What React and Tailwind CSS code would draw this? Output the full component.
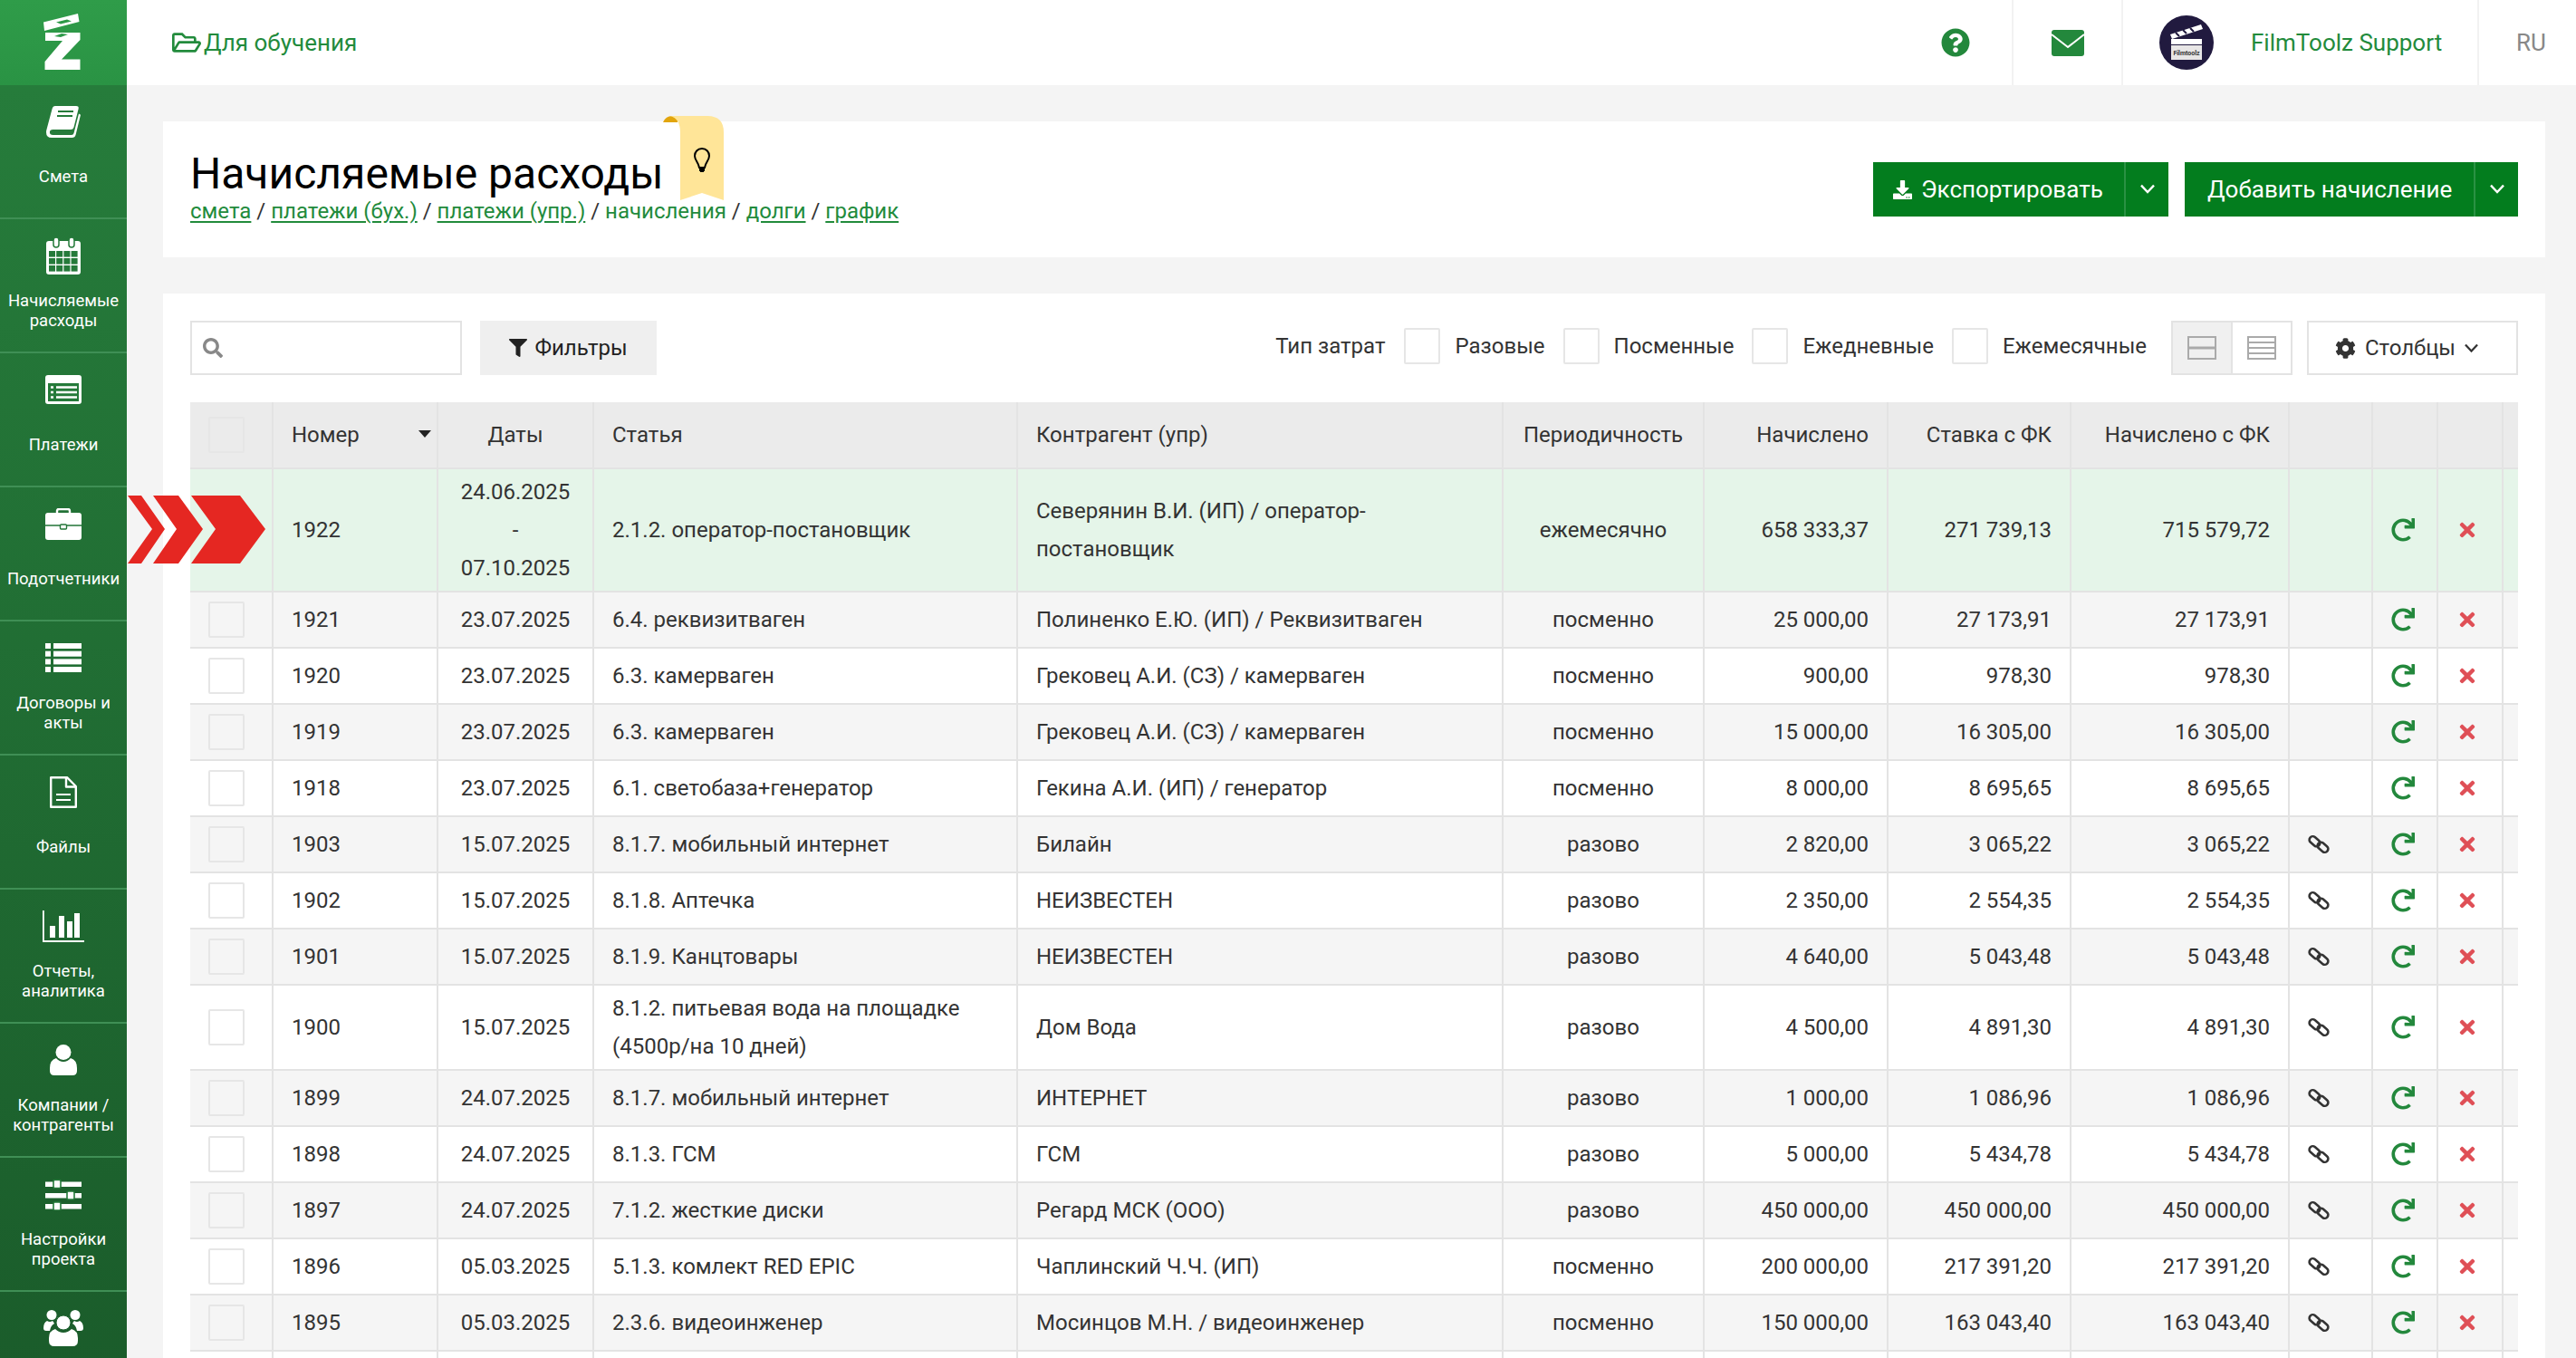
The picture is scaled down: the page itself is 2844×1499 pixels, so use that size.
import React from "react";
import { FaRegFolderOpen, FaQuestionCircle, FaDownload, FaFilter, FaCog, FaRedo, FaTimes, FaSearch } from "react-icons/fa";

const G = "#257a3a";
const IBook = () => (
  <svg width="38" height="35" viewBox="0 0 38 35" fill="#fff">
    <path d="M10 0h23q3.4 0 2.6 3.2L30.5 23.5q-.7 2.5-3.5 2.5H7.5q-3.6 0-3.6 3t3.6 3H28q2 0 2.5-2L36 8.5l2 1.2-5.4 22q-.8 3.3-4.2 3.3H6q-6 0-6-6 0-1.7.6-3.6L6.6 3q.8-3 3.4-3z" />
    <path d="M13 6h17M12 11h17" stroke={G} strokeWidth="2.2" />
  </svg>
);
const ICalendar = () => (
  <svg width="38" height="41" viewBox="0 0 38 41">
    <rect x="0" y="4" width="38" height="37" rx="3" fill="#fff" />
    <rect x="8" y="0" width="6" height="11" rx="3" fill="#fff" stroke={G} strokeWidth="1.5" />
    <rect x="25" y="0" width="6" height="11" rx="3" fill="#fff" stroke={G} strokeWidth="1.5" />
    {[0, 1, 2, 3].map((c) =>
      [0, 1, 2].map((r) => <rect key={c + "-" + r} x={3 + c * 8.2} y={15 + r * 8} width="7" height="6.6" fill={G} />)
    )}
  </svg>
);
const IListAlt = () => (
  <svg width="40" height="32" viewBox="0 0 40 32">
    <rect width="40" height="32" rx="3" fill="#fff" />
    <rect x="3" y="9" width="34" height="20" fill={G} />
    <path d="M12 13.5h23M12 19h23M12 24.5h23M6 13.5h3M6 19h3M6 24.5h3" stroke="#fff" strokeWidth="2.4" />
  </svg>
);
const IBrief = () => (
  <svg width="40" height="35" viewBox="0 0 40 35">
    <path d="M13 6V3q0-2 2-2h10q2 0 2 2v3" fill="none" stroke="#fff" strokeWidth="2.4" />
    <rect y="5" width="40" height="30" rx="3" fill="#fff" />
    <path d="M0 19h16M24 19h16" stroke="#237538" strokeWidth="1.4" />
    <rect x="16.5" y="18" width="7" height="5" rx="1" fill="#fff" stroke="#237538" strokeWidth="1.4" />
  </svg>
);
const IList = () => (
  <svg width="40" height="32" viewBox="0 0 40 32" fill="#fff">
    {[0, 8.7, 17.4, 26].map((y) => (
      <g key={y}>
        <rect y={y} width="6" height="6" />
        <rect x="9" y={y} width="31" height="6" />
      </g>
    ))}
  </svg>
);
const IFile = () => (
  <svg width="30" height="35" viewBox="0 0 30 35" fill="none" stroke="#fff" strokeWidth="2.4" strokeLinejoin="round">
    <path d="M1.2 1.2H19L28.8 11v22.8H1.2z" />
    <path d="M18 1.2V11.5H28.8" />
    <path d="M7 20h16M7 26h16" strokeWidth="2.2" />
  </svg>
);
const IChart = () => (
  <svg width="46" height="35" viewBox="0 0 46 35" fill="#fff">
    <path d="M0 0h1.8v33H46v2H0z" />
    <rect x="8" y="17" width="6" height="13" />
    <rect x="18" y="6" width="6" height="24" />
    <rect x="27" y="12" width="6" height="18" />
    <rect x="35" y="3" width="6" height="27" />
  </svg>
);
const IUser = () => (
  <svg width="30" height="34" viewBox="0 0 30 34" fill="#fff">
    <circle cx="15" cy="8.5" r="8.5" />
    <path d="M7 15q3.500 4 8 4t8-4q7 2 7 11v3q0 5-5 5H5q-5 0-5-5v-3q0-9 7-11z" />
  </svg>
);
const ISliders = () => (
  <svg width="40" height="35" viewBox="0 0 40 35" fill="#fff" stroke={G}>
    <rect y="3.500" width="40" height="5.500" stroke="none" />
    <rect y="16" width="40" height="5.500" stroke="none" />
    <rect y="28" width="40" height="5.500" stroke="none" />
    <rect x="9" y="1.500" width="8" height="9" rx="1.500" strokeWidth="1.600" />
    <rect x="24" y="14" width="8" height="9" rx="1.500" strokeWidth="1.600" />
    <rect x="9" y="26" width="8" height="9" rx="1.500" strokeWidth="1.600" />
  </svg>
);
const IUsers = () => (
  <svg width="44" height="40" viewBox="0 0 44 40" fill="#fff">
    <circle cx="9" cy="5.500" r="5.500" />
    <circle cx="35" cy="5.500" r="5.500" />
    <path d="M4 12q-4 2-4 8 0 3 3 3h4q1-6 5-8-1-2-2-3-3 2-6 0zM40 12q4 2 4 8 0 3-3 3h-4q-1-6-5-8 1-2 2-3 3 2 6 0z" />
    <circle cx="22" cy="14" r="8" stroke="#1c5f2c" strokeWidth="1" />
    <path d="M13 21q4 4 9 4t9-4q7 2 7 10v3q0 6-6 6H12q-6 0-6-6v-3q0-8 7-10z" />
  </svg>
);

const Logo = () => (
  <svg width="44" height="62" viewBox="0 0 44 62" fill="#fff" className="mt-[-2px]">
    <path d="M0 9.500 38 0l1.500 9L1 19z" />
    <path d="M14 9.500 26 6.500l5 2-12 3z" fill="#2c9947" />
    <path d="M2 21h38.500v8L20 50.500h20.500V62H1.500v-9L21 30H2z" />
    <path d="M12 25l8-3 7 1-8 3z" fill="#2c9947" />
  </svg>
);

const nav = [
  [IBook, ["Смета"]],
  [ICalendar, ["Начисляемые", "расходы"]],
  [IListAlt, ["Платежи"]],
  [IBrief, ["Подотчетники"]],
  [IList, ["Договоры и", "акты"]],
  [IFile, ["Файлы"]],
  [IChart, ["Отчеты,", "аналитика"]],
  [IUser, ["Компании /", "контрагенты"]],
  [ISliders, ["Настройки", "проекта"]],
  [IUsers, []],
];

const Check = ({ cls = "" }) => <span className={"block w-10 h-10 border-2 border-[#e6e6e6] rounded-[2px] " + cls} />;

const Chain = () => (
  <svg width="24" height="24" viewBox="0 0 24 24" fill="none" stroke="#333" strokeWidth="2.600">
    <rect x="1" y="5" width="13" height="7.500" rx="3.700" transform="rotate(40 7.500 8.750)" />
    <rect x="10" y="11.500" width="13" height="7.500" rx="3.700" transform="rotate(40 16.500 15.250)" />
  </svg>
);

const Chevron = ({ size = 16 }) => (
  <svg width={size} height={size * 0.7} viewBox="0 0 16 11" fill="none" stroke="currentColor" strokeWidth="2.400">
    <path d="M1 1.500 8 9l7-7.500" />
  </svg>
);

const rows = [
  ["1922", ["24.06.2025", "-", "07.10.2025"], "2.1.2. оператор-постановщик", "Северянин В.И. (ИП) / оператор-постановщик", "ежемесячно", "658 333,37", "271 739,13", "715 579,72", 0],
  ["1921", ["23.07.2025"], "6.4. реквизитваген", "Полиненко Е.Ю. (ИП) / Реквизитваген", "посменно", "25 000,00", "27 173,91", "27 173,91", 0],
  ["1920", ["23.07.2025"], "6.3. камерваген", "Грековец А.И. (СЗ) / камерваген", "посменно", "900,00", "978,30", "978,30", 0],
  ["1919", ["23.07.2025"], "6.3. камерваген", "Грековец А.И. (СЗ) / камерваген", "посменно", "15 000,00", "16 305,00", "16 305,00", 0],
  ["1918", ["23.07.2025"], "6.1. светобаза+генератор", "Гекина А.И. (ИП) / генератор", "посменно", "8 000,00", "8 695,65", "8 695,65", 0],
  ["1903", ["15.07.2025"], "8.1.7. мобильный интернет", "Билайн", "разово", "2 820,00", "3 065,22", "3 065,22", 1],
  ["1902", ["15.07.2025"], "8.1.8. Аптечка", "НЕИЗВЕСТЕН", "разово", "2 350,00", "2 554,35", "2 554,35", 1],
  ["1901", ["15.07.2025"], "8.1.9. Канцтовары", "НЕИЗВЕСТЕН", "разово", "4 640,00", "5 043,48", "5 043,48", 1],
  ["1900", ["15.07.2025"], "8.1.2. питьевая вода на площадке (4500р/на 10 дней)", "Дом Вода", "разово", "4 500,00", "4 891,30", "4 891,30", 1],
  ["1899", ["24.07.2025"], "8.1.7. мобильный интернет", "ИНТЕРНЕТ", "разово", "1 000,00", "1 086,96", "1 086,96", 1],
  ["1898", ["24.07.2025"], "8.1.3. ГСМ", "ГСМ", "разово", "5 000,00", "5 434,78", "5 434,78", 1],
  ["1897", ["24.07.2025"], "7.1.2. жесткие диски", "Регард МСК (ООО)", "разово", "450 000,00", "450 000,00", "450 000,00", 1],
  ["1896", ["05.03.2025"], "5.1.3. комлект RED EPIC", "Чаплинский Ч.Ч. (ИП)", "посменно", "200 000,00", "217 391,20", "217 391,20", 1],
  ["1895", ["05.03.2025"], "2.3.6. видеоинженер", "Мосинцов М.Н. / видеоинженер", "посменно", "150 000,00", "163 043,40", "163 043,40", 1],
];

const td = "border-r-2 border-b-2 border-[#e3e3e3] px-5 py-1 h-[62px] align-middle";
const th = "border-r-2 border-b-2 border-[#e3e3e3] px-5 h-[74px] align-middle font-normal";
const widths = ["w-[92px]", "w-[182px]", "w-[172px]", "w-[468px]", "w-[536px]", "w-[222px]", "w-[203px]", "w-[202px]", "w-[241px]", "w-[92px]", "w-[72px]", "w-[72px]", "w-[16px]"];

const Filter = ({ label, cls }) => (
  <div className={"flex items-center gap-4 " + cls}>
    <Check cls="bg-white" />
    <span>{label}</span>
  </div>
);

const Crumb = ({ children }) => <a className="text-[#228b3c] underline underline-offset-[3px]">{children}</a>;

export default function App() {
  return (
    <div className="flex h-screen w-screen overflow-hidden bg-[#f4f4f4] font-[Roboto] text-[24px] leading-[42px] text-[#333]">
      <aside className="w-[140px] shrink-0 flex flex-col overflow-hidden">
        <div className="h-[94px] shrink-0 flex items-center justify-center bg-gradient-to-b from-[#2f9c49] to-[#2a9344]">
          <Logo />
        </div>
        <nav className="flex-1 bg-gradient-to-b from-[#267c3b] to-[#1a5b2a] text-white text-[18.500px] leading-[22.500px]">
          {nav.map(([Icon, lines], i) => (
            <div key={i} className={"h-[148px] pt-[18px] flex flex-col items-center border-b-2 border-[#3f8f55] " + (i === 0 ? "h-[146px]" : "")}>
              <div className="h-[44px] flex items-center justify-center">
                <Icon />
              </div>
              <div className="h-[46px] mt-[16px] flex flex-col justify-center items-center">
                {lines.map((l) => (
                  <span key={l} className="whitespace-nowrap">{l}</span>
                ))}
              </div>
            </div>
          ))}
        </nav>
      </aside>

      <div className="flex-1 min-w-0 flex flex-col">
        <header className="h-[94px] shrink-0 bg-white flex items-stretch">
          <div className="flex items-center pl-[50px] gap-[3px] text-[#228b3c] text-[26px]">
            <FaRegFolderOpen className="text-[32px]" />
            <span>Для обучения</span>
          </div>
          <div className="ml-auto flex items-stretch">
            <div className="w-[124px] flex items-center justify-center border-r-2 border-[#f2f2f2] text-[#23883c] pr-[2px]">
              <FaQuestionCircle className="text-[32px]" />
            </div>
            <div className="w-[121px] flex items-center justify-center border-r-2 border-[#f2f2f2]">
              <svg width="36" height="29" viewBox="0 0 36 29">
                <rect width="36" height="29" rx="3" fill="#23883c" />
                <path d="M0 5 18 19 36 5" fill="none" stroke="#fff" strokeWidth="2" />
              </svg>
            </div>
            <div className="w-[393px] flex items-center pl-[40px] gap-[41px] border-r-2 border-[#f2f2f2] text-[#228b3c] text-[26px]">
              <svg width="60" height="60" viewBox="0 0 60 60">
                <circle cx="30" cy="30" r="30" fill="#211a3f" />
                <path d="M12 21 46 10l2 5-34 11z" fill="#fff" />
                <path d="M18 19l4 4M26 16l4 4M34 14l4 4" stroke="#211a3f" strokeWidth="2" />
                <rect x="13" y="26" width="34" height="6" fill="#fff" />
                <rect x="13" y="33" width="34" height="16" fill="#e8e6e6" />
                <text x="30" y="44" fontSize="7" fontWeight="700" textAnchor="middle" fill="#333">Filmtoolz</text>
              </svg>
              <span className="whitespace-nowrap">FilmToolz Support</span>
            </div>
            <div className="w-[107px] flex items-center pl-[41px] text-[#888] text-[26px]">RU</div>
          </div>
        </header>

        <main className="flex-1 min-h-0 pt-[40px] pl-[40px] pr-[34px] flex flex-col gap-[40px]">
          <section className="relative h-[150px] shrink-0 bg-white px-[30px] pt-[31px] flex justify-between">
            <div>
              <h1 className="text-[48px] leading-[54px] text-black">Начисляемые расходы</h1>
              <div className="leading-[28px] whitespace-nowrap">
                <Crumb>смета</Crumb> / <Crumb>платежи (бух.)</Crumb> / <Crumb>платежи (упр.)</Crumb> / <span className="text-[#228b3c]">начисления</span> / <Crumb>долги</Crumb> / <Crumb>график</Crumb>
              </div>
            </div>
            <svg className="absolute left-[552px] top-[-6px]" width="67" height="93" viewBox="0 0 67 93">
              <path d="M0 7Q3 0 10 0h6v7z" fill="#e2a50c" />
              <path d="M8 0h41q18 0 18 18v75L43 85 19 93V18Q19 3 8 0z" fill="#ffe598" />
              <path d="M43 36c-5 0-8 4-8 8 0 5 4 7 5 13h6c1-6 5-8 5-13 0-4-3-8-8-8z" fill="none" stroke="#000" strokeWidth="2" transform="translate(0 0)" />
              <path d="M40 58h6v3h-1v1h-4v-1h-1z" fill="#000" />
            </svg>
            <div className="flex gap-[18px] mt-[14px] h-[60px] text-white text-[26px] leading-[60px]">
              <div className="w-[326px] flex bg-[#037d1e]">
                <div className="flex-1 flex items-center pl-[22px] gap-[10px]">
                  <FaDownload className="text-[21px]" />
                  <span>Экспортировать</span>
                </div>
                <div className="w-[49px] flex items-center justify-center border-l-2 border-[#2a9143]"><Chevron /></div>
              </div>
              <div className="w-[368px] flex bg-[#037d1e]">
                <div className="flex-1 flex items-center pl-[25px]">
                  <span>Добавить начисление</span>
                </div>
                <div className="w-[49px] flex items-center justify-center border-l-2 border-[#2a9143]"><Chevron /></div>
              </div>
            </div>
          </section>

          <section className="flex-1 min-h-0 bg-white px-[30px] pt-[30px]">
            <div className="h-[60px] flex items-stretch mb-[30px]">
              <div className="w-[300px] border-2 border-[#e3e3e3] flex items-center pl-[12px]">
                <FaSearch className="text-[22px] text-[#888]" />
              </div>
              <div className="ml-[20px] w-[195px] bg-[#efefef] flex items-center justify-center gap-[8px] text-[#222]">
                <FaFilter className="text-[20px]" />
                <span>Фильтры</span>
              </div>
              <div className="ml-auto flex items-center">
                <div className="flex items-center h-[56px] mb-[4px]">
                  <span className="mr-[21px]">Тип затрат</span>
                  <Filter label="Разовые" cls="mr-[20px]" />
                  <Filter label="Посменные" cls="mr-[20px]" />
                  <Filter label="Ежедневные" cls="mr-[20px]" />
                  <Filter label="Ежемесячные" cls="" />
                </div>
                <div className="ml-[27px] w-[134px] h-[60px] flex border-2 border-[#e3e3e3]">
                  <div className="w-[66px] bg-[#f0f0f0] border-r-2 border-[#e3e3e3] flex items-center justify-center">
                    <svg width="32" height="26" viewBox="0 0 32 26" fill="none" stroke="#aaa" strokeWidth="2">
                      <rect x="1" y="1" width="30" height="24" />
                      <path d="M1 13h30" strokeWidth="3" />
                    </svg>
                  </div>
                  <div className="flex-1 flex items-center justify-center">
                    <svg width="32" height="26" viewBox="0 0 32 26" fill="none" stroke="#aaa" strokeWidth="2">
                      <rect x="1" y="1" width="30" height="24" />
                      <path d="M1 7h30M1 13h30M1 19h30" />
                    </svg>
                  </div>
                </div>
                <div className="ml-[16px] w-[233px] h-[60px] border-2 border-[#e3e3e3] flex items-center pl-[29px] gap-[10px]">
                  <FaCog className="text-[23px]" />
                  <span>Столбцы</span>
                  <Chevron size={15} />
                </div>
              </div>
            </div>

            <table className="table-fixed border-separate border-spacing-0 w-[2570px] bg-white">
              <colgroup>
                {widths.map((w, i) => <col key={i} className={w} />)}
              </colgroup>
              <thead className="bg-[#ebebeb]">
                <tr>
                  <th className={th}><Check cls="bg-[#ebebeb]" /></th>
                  <th className={th + " text-left relative"}>
                    Номер
                    <span className="absolute right-[6px] top-[31px] w-0 h-0 border-x-[7px] border-x-transparent border-t-[8px] border-t-[#222]" />
                  </th>
                  <th className={th + " text-center"}>Даты</th>
                  <th className={th + " text-left"}>Статья</th>
                  <th className={th + " text-left"}>Контрагент (упр)</th>
                  <th className={th + " text-center"}>Периодичность</th>
                  <th className={th + " text-right"}>Начислено</th>
                  <th className={th + " text-right"}>Ставка с ФК</th>
                  <th className={th + " text-right"}>Начислено с ФК</th>
                  <th className={th}></th>
                  <th className={th}></th>
                  <th className={th}></th>
                  <th className="border-b-2 border-[#e3e3e3]"></th>
                </tr>
              </thead>
              <tbody>
                {rows.map((r, i) => {
                  const bg = i === 0 ? "bg-[#e5f5e9]" : i % 2 === 1 ? "bg-[#f5f5f5]" : "bg-white";
                  return (
                    <tr key={r[0]} className={bg}>
                      <td className={td + " relative"}>
                        {i === 0 ? (
                          <svg className="absolute left-[-69px] top-[29px] z-10" width="152" height="76" viewBox="0 0 152 76" fill="#e52722">
                            <path d="M0 0h15l26 37L15 75H0l27-38z" />
                            <path d="M28 0h28l27 37-27 38H28l26-38z" />
                            <path d="M70 0h54l28 37-28 38H70l27-38z" />
                          </svg>
                        ) : (
                          <Check />
                        )}
                      </td>
                      <td className={td}>{r[0]}</td>
                      <td className={td + " text-center px-0"}>{r[1].map((d) => <div key={d}>{d}</div>)}</td>
                      <td className={td}>{r[2]}</td>
                      <td className={td}>{r[3]}</td>
                      <td className={td + " text-center"}>{r[4]}</td>
                      <td className={td + " text-right whitespace-nowrap"}>{r[5]}</td>
                      <td className={td + " text-right whitespace-nowrap"}>{r[6]}</td>
                      <td className={td + " text-right whitespace-nowrap"}>{r[7]}</td>
                      <td className={td}>{r[8] ? <Chain /> : null}</td>
                      <td className={td}><FaRedo className="text-[26px] text-[#23883c]" /></td>
                      <td className={td}><FaTimes className="text-[24px] text-[#df4f56]" /></td>
                      <td className="border-b-2 border-[#e3e3e3]"></td>
                    </tr>
                  );
                })}
                <tr>
                  <td className={td}></td>
                  <td className={td}></td>
                  <td className={td}></td>
                  <td className={td}></td>
                  <td className={td}></td>
                  <td className={td}></td>
                  <td className={td}></td>
                  <td className={td}></td>
                  <td className={td}></td>
                  <td className={td}></td>
                  <td className={td}></td>
                  <td className={td}></td>
                  <td className="border-b-2 border-[#e3e3e3]"></td>
                </tr>
              </tbody>
            </table>
          </section>
        </main>
      </div>
    </div>
  );
}
